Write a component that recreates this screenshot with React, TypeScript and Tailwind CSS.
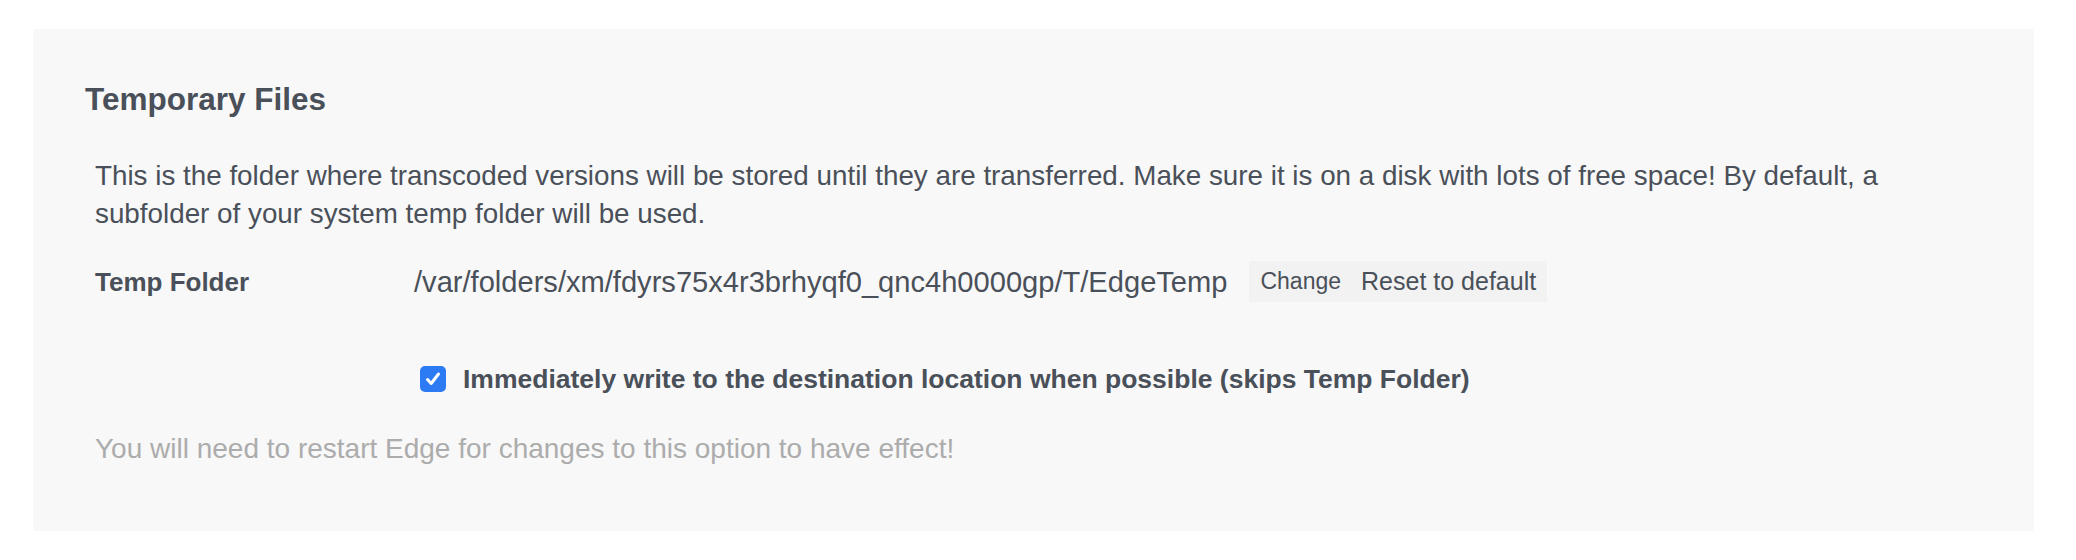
import { useState } from 'react';

const font = { fontFamily: '"Liberation Sans Narrow", "Liberation Sans", Arial, sans-serif' };

const App = () => {
  const [immediate, setImmediate] = useState(true);

  return (
    <div className="min-h-[560px] w-[2076px] bg-white pt-[29px] pl-[33px]" style={font}>
      <div className="w-[2001px] bg-[#f8f8f8] pt-[50px] pb-[63px] pl-[52px] pr-[60px] text-[#4a5059]">
        <h2 className="text-[31.5px] leading-[40px] font-bold">Temporary Files</h2>

        <div className="pl-[10px]">
          <p className="mt-[38px] text-[27.8px] leading-[38px]">
            This is the folder where transcoded versions will be stored until they are transferred. Make sure it is on a disk with lots of free space! By default, a subfolder of your system temp folder will be used.
          </p>

          <div className="mt-[28px] flex items-center">
            <div className="w-[319px] text-[26px] leading-[38px] font-bold">Temp Folder</div>
            <div className="text-[29.1px] leading-[38px]">/var/folders/xm/fdyrs75x4r3brhyqf0_qnc4h0000gp/T/EdgeTemp</div>
            <div className="ml-[22px] flex h-[41px] items-center bg-[#f2f2f2]">
              <button className="pl-[11px] pr-[10px] text-[23px] leading-[41px] text-[#4a5059]">Change</button>
              <button className="pl-[10px] pr-[11px] text-[25px] leading-[41px] text-[#4a5059]">Reset to default</button>
            </div>
          </div>

          <label className="mt-[58px] ml-[325px] flex cursor-pointer items-center">
            <span
              onClick={() => setImmediate(!immediate)}
              className={
                immediate
                  ? 'flex h-[26px] w-[26px] items-center justify-center rounded-[5px] bg-[#2c7bf5]'
                  : 'flex h-[26px] w-[26px] items-center justify-center rounded-[5px] border border-gray-400 bg-white'
              }
            >
              {immediate && (
                <svg width="18" height="18" viewBox="0 0 18 18" fill="none">
                  <path d="M3.5 9.5 L7.2 13.5 L14.5 4" stroke="white" strokeWidth="3" strokeLinecap="round" strokeLinejoin="round" />
                </svg>
              )}
            </span>
            <span className="ml-[17px] text-[26.5px] leading-[38px] font-bold">
              Immediately write to the destination location when possible (skips Temp Folder)
            </span>
          </label>

          <p className="mt-[32px] text-[28px] leading-[38px] text-[#acacac]">
            You will need to restart Edge for changes to this option to have effect!
          </p>
        </div>
      </div>
    </div>
  );
};

export default App;
